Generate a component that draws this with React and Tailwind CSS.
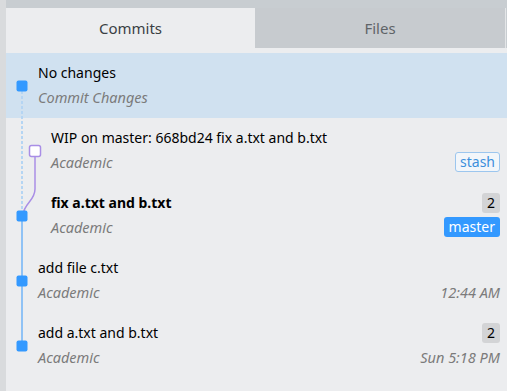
import React from "react";

const commits = [
  { title: "No changes", author: "Commit Changes", indent: false, selected: true },
  { title: "WIP on master: 668bd24 fix a.txt and b.txt", author: "Academic", indent: true, stash: true },
  { title: "fix a.txt and b.txt", author: "Academic", indent: true, bold: true, count: 2, branch: "master" },
  { title: "add file c.txt", author: "Academic", time: "12:44 AM" },
  { title: "add a.txt and b.txt", author: "Academic", count: 2, time: "Sun 5:18 PM" },
];

const Graph = () => (
  <svg className="absolute left-0 top-0 pointer-events-none" width="48" height="330">
    <line x1="16" y1="38" x2="16" y2="162" stroke="#b5d5f3" strokeWidth="2" strokeDasharray="3 2" />
    <path d="M29 104 L29 136 C29 148 18 150 17 162" fill="none" stroke="#a98ee6" strokeWidth="1.5" />
    <line x1="16" y1="163" x2="16" y2="293" stroke="#8fc2f5" strokeWidth="2" />
    <rect x="23.5" y="92.5" width="11" height="11" rx="2" fill="#ffffff" stroke="#a98ee6" strokeWidth="1.5" />
    {[33, 163, 228, 293].map((y) => (
      <rect key={y} x="10.5" y={y - 5.5} width="11" height="11" rx="2" fill="#3399ff" />
    ))}
  </svg>
);

export default function App() {
  return (
    <div
      className="w-[507px] h-[391px] bg-[#d9dbdd] pl-[6px] overflow-hidden text-[14px]"
      style={{ fontFamily: '"Noto Sans", "Open Sans", sans-serif' }}
    >
      <div className="h-full bg-[#ecedef] flex flex-col">
        <div className="flex h-[48px] bg-[#c8cdd1] pt-[8px]">
          <div className="w-[249px] bg-[#ecedef] flex items-center justify-center text-[15px] text-[#3a3f44]">
            Commits
          </div>
          <div className="w-[250px] bg-[#c7cbcf] flex items-center justify-center text-[15px] text-[#5f6468]">
            Files
          </div>
          <div className="w-px bg-[#e4e6e8]" />
        </div>
        <div className="h-[5px]" />
        <div className="relative">
          {commits.map((c, i) => (
            <div
              key={i}
              className={`h-[65px] flex pt-[10px] pr-[7px] ${c.selected ? "bg-[#d0e1f0]" : ""} ${c.indent ? "pl-[45px]" : "pl-[32px]"}`}
            >
              <div className="flex-1 flex flex-col gap-[4px] min-w-0">
                <div className={`leading-[20px] text-black whitespace-nowrap ${c.bold ? "font-bold" : ""}`}>{c.title}</div>
                <div className="leading-[20px] italic text-[14.5px] text-[#7b7b7b]">{c.author}</div>
              </div>
              <div className="flex flex-col items-end gap-[4px]">
                <div className="h-[20px] flex items-center">
                  {c.count && (
                    <span className="h-[20px] px-[5px] rounded-[3px] bg-[#d3d4d6] text-black leading-[20px]">{c.count}</span>
                  )}
                </div>
                <div className="h-[20px] flex items-center">
                  {c.stash && (
                    <span className="h-[20px] px-[4px] rounded-[3px] border border-[#9cc6ee] bg-[#f2f6fa] text-[#3c8fdc] leading-[18px]">stash</span>
                  )}
                  {c.branch && (
                    <span className="h-[20px] px-[5px] rounded-[3px] bg-[#3399ff] text-white leading-[20px]">{c.branch}</span>
                  )}
                  {c.time && <span className="italic text-[14.5px] text-[#7b7b7b] leading-[20px]">{c.time}</span>}
                </div>
              </div>
            </div>
          ))}
          <Graph />
        </div>
      </div>
    </div>
  );
}
